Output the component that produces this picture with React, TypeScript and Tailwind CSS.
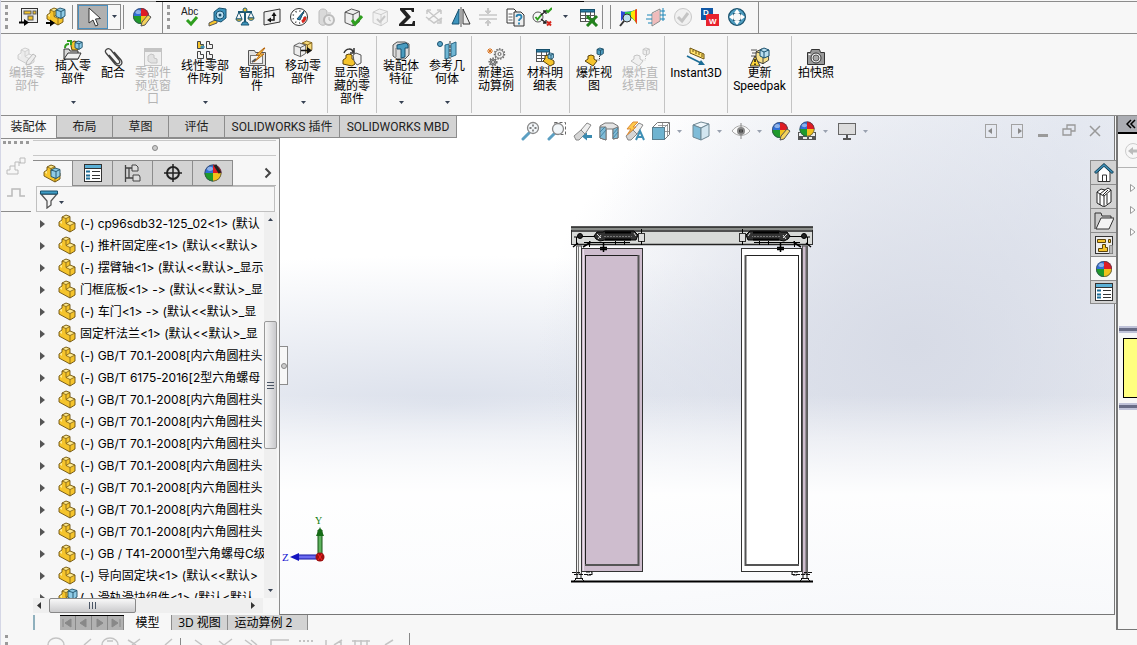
import type { ReactNode } from 'react'

const YELLOW = '#f5c42c'
const BLUE = '#3f8fb5'
const DARK = '#333'

const Ball = ({ r = 8, x = 10, y = 10 }: { r?: number; x?: number; y?: number }) => (
  <g transform={`translate(${x} ${y}) scale(${r})`}>
    <circle r="1" fill="#2f6fd8" />
    <path d="M0 0V-1A1 1 0 0 1 1 0Z" fill="#e01b24" />
    <path d="M0 0H1A1 1 0 0 1 0 1Z" fill="#f2c21c" />
    <path d="M0 0V1A1 1 0 0 1 -1 0Z" fill="#1f9a2c" />
    <ellipse cx="-.35" cy="-.5" rx=".35" ry=".25" fill="#fff" opacity=".45" />
    <circle r=".95" fill="none" stroke="#444" strokeWidth=".08" />
  </g>
)

const Pencil = () => (
  <path d="M9 19l1-4 6-7 3 2-6 8z" fill="#f4d35e" stroke="#555" />
)

const Part = ({ fill = YELLOW, line = '#6b5010', light = '#ffe98a' }: { fill?: string; line?: string; light?: string }) => (
  <g strokeLinejoin="round" strokeWidth=".9">
    <path d="M1 8l3-2V3l4-2 4 1.500V7l5 2v6l-5 3L1 12z" fill={fill} />
    <path d="M4 3l4-2 4 1.500-4 2zM8 9.500L12 7l5 2-5 2.500zM1 8l3-2v4z" fill={light} />
    <path d="M1 8l3-2V3l4-2 4 1.500V7l5 2v6l-5 3L1 12z" fill="none" stroke={line} />
    <path d="M4 3l4 1.500 4-2M8 4.500v5l4 2 5-2.500M12 11.500V18M8 9.500L12 7" fill="none" stroke={line} strokeWidth=".7" />
  </g>
)

const Cube = ({ x = 10, y = 1, s = 1, fill = '#8fcbe6', line = '#1d4f68' }: { x?: number; y?: number; s?: number; fill?: string; line?: string }) => (
  <g transform={`translate(${x} ${y}) scale(${s})`} fill={fill} stroke={line} strokeWidth={0.9 / s} strokeLinejoin="round">
    <path d="M0 2l4-2 5 1.500v6.500l-4 2.500-5-2z" />
    <path d="M0 2l5 1.500v7M5 3.500l4-2" fill="none" />
  </g>
)

const Table = ({ w = 14 }: { w?: number }) => (
  <g>
    <rect x="1.500" y="2.500" width={w} height="12" fill="#fff" stroke="#555" />
    <rect x="1.500" y="2.500" width={w} height="2.500" fill="#2b7ca3" stroke="#174f6b" />
    <path d={`M2 8.500h${w}M2 11.500h${w}M6.500 5v10M11.500 5v10`} stroke="#555" />
  </g>
)

const Lens = ({ x = 12, y = 7 }: { x?: number; y?: number }) => (
  <g>
    <path d={`M${x - 4} ${y + 5}L2 18`} stroke="#5b9fc2" strokeWidth="3" strokeLinecap="round" />
    <circle cx={x} cy={y} r="5.500" fill="#f2f6f9" stroke="#888" strokeWidth="1.300" />
  </g>
)

const Torch = () => (
  <g fill="#d5d5d5" stroke="#888" strokeLinejoin="round">
    <path d="M1 15l7-6 4 4-6 6H3z" />
    <path d="M8 9l6-7 4 2-6 9z" fill="#eee" />
  </g>
)

const Gear = ({ x, y, r, fill }: { x: number; y: number; r: number; fill: string }) => (
  <g>
    <circle cx={x} cy={y} r={r} stroke="#666" strokeWidth="1.500" strokeDasharray="1.500 1.300" />
    <circle cx={x} cy={y} r={r - 0.8} fill={fill} stroke="#666" strokeWidth=".8" />
    <circle cx={x} cy={y} r="1.500" fill="#f7f7f7" stroke="#666" />
  </g>
)

const List = () => (
  <g>
    <rect x="1.500" y="1.500" width="17" height="17" fill="#fff" stroke={DARK} />
    <rect x="2" y="2" width="16" height="3" fill="#5ab0d6" />
    <path d="M1.500 5.500h17" stroke={DARK} />
    <path d="M9 8.500h8M9 12.500h8M9 15.500h8" stroke={DARK} />
    <path d="M3 8.500h4M3 12.500h4M3 15.500h4" stroke="#1c6d96" strokeWidth="2" />
  </g>
)

const icons: Record<string, ReactNode> = {
  drawing: (
    <g>
      <rect x="2.500" y="1.500" width="16" height="14" fill="#eee" stroke={DARK} />
      <rect x="5" y="4" width="7" height="3" fill={YELLOW} stroke="#555" />
      <rect x="14" y="4" width="3" height="3" fill={YELLOW} stroke="#555" />
      <rect x="9" y="9" width="5" height="4" fill={YELLOW} stroke="#555" />
      <path d="M0 15.500h6" stroke="#000" strokeWidth="2" />
      <path d="M5 12l5 3.500L5 19z" fill="#000" />
    </g>
  ),
  assembly: (
    <g>
      <Part />
      <Cube />
      <path d="M0 16h5" stroke="#000" strokeWidth="2" />
      <path d="M4 12.500l5 3.500-5 3.500z" fill="#000" />
    </g>
  ),
  cursor: <path d="M6 1v15l4-3 2.500 6 2.500-1-2.500-6 5-.5z" fill="#fff" stroke="#333" />,
  paint: <g><Ball r={8} x={9} y={9} /><Pencil /></g>,
  spell: (
    <g>
      <text x="0" y="8" fontSize="10" fontFamily="Liberation Sans, sans-serif" fill="#222">Abc</text>
      <path d="M6 13l4 4 6-7" stroke="#2f9e1f" strokeWidth="3" fill="none" />
    </g>
  ),
  measure: (
    <g>
      <path d="M9 12l-8 4v3l8-3z" fill={YELLOW} stroke="#555" />
      <path d="M6 13V5l5-4 7 1v9l-5 4z" fill="#3d94bd" stroke="#18506e" />
      <circle cx="12" cy="8" r="4" fill="#b9def0" stroke="#18506e" />
      <circle cx="12" cy="8" r="1.500" fill="#18506e" />
    </g>
  ),
  scale: (
    <g stroke="#1c5875" fill="none">
      <path d="M10 2v15M3 5h14" strokeWidth="2" />
      <path d="M4 5l-3 7h6zM16 5l-3 6h6z" />
      <path d="M1 12h6c0 3-6 3-6 0zM13 11h6c0 3-6 3-6 0z" fill={YELLOW} />
      <path d="M6 18h8l-2-3H8z" fill="#3d94bd" />
      <circle cx="10" cy="3" r="2" fill={YELLOW} />
    </g>
  ),
  section: (
    <g>
      <path d="M2 5l16-3v13L2 18z" fill="#eee" stroke={DARK} />
      <path d="M7 13h5V8" stroke="#111" strokeWidth="1.500" fill="none" />
      <path d="M5 13l4-2.500v5zM12 5l-2.500 4h5z" fill="#111" />
    </g>
  ),
  gauge: (
    <g>
      <circle cx="10" cy="10" r="8.500" fill="#fff" stroke={DARK} />
      <circle cx="10" cy="10" r="6" fill="none" stroke={DARK} strokeDasharray="1 3" strokeWidth="1.500" />
      <path d="M16 10a6 6 0 0 1-3 5" stroke="#d7261d" strokeWidth="3" fill="none" />
      <path d="M8 12l7-8-4 9z" fill="#2680b0" stroke="#174f6b" />
    </g>
  ),
  timer: (
    <g fill="#d9d9d9" stroke="#bbb">
      <path d="M3 16V5c0-4 8-4 8 0v11c-2 3-6 3-8 0z" />
      <circle cx="13" cy="13" r="5" fill="#eee" strokeWidth="2" />
      <path d="M13 10v3l2 1M12 6h3" />
    </g>
  ),
  cubeCheck: (
    <g>
      <Cube x={2} y={2} s={1.6} fill="#eee" line="#444" />
      <path d="M9 13l3 4 7-8" stroke="#2f9e1f" strokeWidth="3" fill="none" />
    </g>
  ),
  cubeGray: (
    <g>
      <Cube x={3} y={2} s={1.6} fill="#f2f2f2" line="#c8c8c8" />
      <path d="M7 12l3 3 5-6" stroke="#c8c8c8" strokeWidth="2" fill="none" />
    </g>
  ),
  sigma: <path d="M3 1h14v4h-2l-1-2H8l6 7-7 7h8l1-3h2v5H2v-2l7-7-6-7z" fill="#222" />,
  split: (
    <g stroke="#c8c8c8" fill="none" strokeWidth="1.500">
      <path d="M3 3h4M3 3v4M3 3l14 12M17 3h-4M17 3v4M17 3L4 13M2 10l8 6 8-5" />
      <path d="M13 16h4v-4" />
    </g>
  ),
  mirror: (
    <g strokeLinejoin="round">
      <path d="M8 2v15H1z" fill="#3d94bd" stroke="#18506e" />
      <path d="M10 0v20" stroke="#555" />
      <path d="M12 2v15h7z" fill="#eee" stroke={DARK} />
    </g>
  ),
  squeeze: (
    <g stroke="#c8c8c8" fill="#c8c8c8">
      <path d="M1 8h18M1 12h18" strokeWidth="1.500" />
      <path d="M10 1v3M10 19v-3" strokeWidth="2" />
      <path d="M7 4h6l-3 3zM7 16h6l-3-3z" />
    </g>
  ),
  help: (
    <g>
      <path d="M2 2h7l2 2v12H2z" fill="#fff" stroke={DARK} />
      <path d="M9 5h7l3 3v11H9z" fill="#eee" stroke={DARK} />
      <path d="M3.500 7h4M3.500 10h4M3.500 13h4" stroke="#666" />
      <path d="M11.500 10c0-3 5-3 5 0 0 2-2.500 1.500-2.500 4M14 15.500v2" fill="none" stroke="#2680b0" strokeWidth="1.800" />
    </g>
  ),
  accept: (
    <g fill="none">
      <circle cx="6" cy="10" r="5" stroke="#555" />
      <path d="M3.500 10l2 2.500 4-5" stroke="#2f9e1f" strokeWidth="2" />
      <path d="M9 12l5 4M9 8l5-4M11 4h3v3M11 16h3v-3" stroke="#222" strokeWidth="1.300" />
      <path d="M14 3l2 2 4-4" stroke="#2f9e1f" strokeWidth="2" />
      <path d="M15 14.500l4 4M19 14.500l-4 4" stroke="#d7261d" strokeWidth="2" />
    </g>
  ),
  excel: (
    <g>
      <Table />
      <path d="M8 9l10 10M18 9L8 19" stroke="#23831d" strokeWidth="3" />
    </g>
  ),
  rainbow: (
    <g>
      <path d="M2 4c6 2 12 0 16-2v15c-2-3-4-7-8-7s-6 2-8 4z" fill="#2c49d8" />
      <path d="M6 5c5 0 9-1 12-3v15c-3-4-6-8-12-8z" fill="#2fd14a" />
      <path d="M12 5l6-3v15c-2-3-4-6-6-7z" fill="#ffe600" />
      <path d="M16 3l2-1v15l-2-3z" fill="#f23a1d" />
      <circle cx="8" cy="11" r="4" fill="#bfe0ee" stroke="#333" />
      <path d="M5 14l-4 5" stroke="#333" strokeWidth="2" />
    </g>
  ),
  flow: (
    <g>
      <path d="M6 6l8-4v12l-8 5z" fill="#fbe3e3" stroke="#888" />
      <path d="M8 6v11M10 5v11M12 4v11" stroke="#e08080" strokeWidth=".8" />
      <path d="M1 8h5M0 12h6M2 16h4M14 4h5M14 8h6M14 12h5M17 1v13" stroke="#1d86b8" />
    </g>
  ),
  okGray: (
    <g fill="none" stroke="#c8c8c8">
      <circle cx="10" cy="10" r="8.500" fill="#f0f0f0" />
      <path d="M5 10l4 4 6-8" strokeWidth="3" stroke="#c4c4c4" />
    </g>
  ),
  dw: (
    <g>
      <rect x="1" y="1" width="12" height="12" fill="#1158a6" />
      <rect x="6" y="7" width="13" height="12" fill="#e8232d" />
      <text x="3" y="8" fontSize="8" fontWeight="bold" fill="#fff" fontFamily="Liberation Sans, sans-serif">D</text>
      <text x="9" y="17" fontSize="8" fontWeight="bold" fill="#fff" fontFamily="Liberation Sans, sans-serif">W</text>
    </g>
  ),
  ring: (
    <g>
      <circle cx="10" cy="10" r="6.500" fill="none" stroke="#174f6b" strokeWidth="5" />
      <circle cx="10" cy="10" r="6.500" fill="none" stroke="#4f9dc0" strokeWidth="2.500" />
      <path d="M10 2l3 4H7zM18 10l-4 3V7zM10 18l-3-4h6zM2 10l4-3v6z" fill="#fff" />
    </g>
  ),
  editPart: (
    <g>
      <Part fill="#ebebeb" line="#c8c8c8" light="#f4f4f4" />
      <path d="M9 18l1-4 6-7 3 2-6 8z" fill="#eee" stroke="#bbb" />
    </g>
  ),
  insert: (
    <g>
      <path d="M8 6V3l3-2 4 1v8H9z" fill={YELLOW} stroke="#5a430c" />
      <Cube x={12} y={1} s={0.8} />
      <path d="M1 19V9h5l1 2h8v8z" fill="#d9d9d9" stroke={DARK} />
      <path d="M1 19l4-6h13l-3 6z" fill="#f1f1f1" stroke={DARK} />
      <path d="M2 8c0-3 1-4 4-4M4 1h4v4" stroke="#2f9e1f" strokeWidth="2" fill="none" />
    </g>
  ),
  clip: (
    <path d="M6 8l7 8c2 2 5 0 3-3L8 3C5 0 1 3 3 6l9 11c4 4 9 0 6-4l-7-8" fill="none" stroke="#444" strokeWidth="1.300" />
  ),
  preview: (
    <g stroke="#c4c4c4" fill="#f0f0f0">
      <rect x="1.500" y="1.500" width="17" height="17" />
      <path d="M2 3.500h16" strokeWidth="3" />
      <path d="M5 14V9l3-2 3 1v3l3 1v4H8z" fill="#e2e2e2" />
    </g>
  ),
  pattern: (
    <g fill="#f4f4f4" stroke="#444">
      <path d="M2.500 1.500h3v3h3v4h-6z" fill={YELLOW} />
      <path d="M11.500 1.500h3v3h3v4h-6zM2.500 11.500h3v3h3v4h-6zM11.500 11.500h3v3h3v4h-6z" />
      <path d="M6 6h3v2H6z" fill={BLUE} stroke={BLUE} />
    </g>
  ),
  smart: (
    <g>
      <path d="M1.500 18.500v-15h6l1 2h10v13z" fill="#e2e2e2" stroke="#555" />
      <rect x="3.500" y="8.500" width="12" height="8" fill="#f4f4f4" stroke="#777" />
      <path d="M17 1l-8 7h4l-6 7 10-8h-4l5-6z" fill="#ffd24a" stroke="#b5640e" />
      <path d="M5 15l4-3" stroke="#555" strokeWidth="2" />
    </g>
  ),
  move: (
    <g>
      <Cube x={9} y={1} s={1.1} fill="#f7db7c" line="#7a5a12" />
      <Cube x={1} y={3} s={1.3} fill="#ececec" line="#555" />
      <path d="M8 10.500h7" stroke="#111" strokeWidth="1.500" />
      <path d="M14 7l5 3.500-5 3.500z" fill="#111" />
    </g>
  ),
  showHide: (
    <g>
      <path d="M1 13l3-2V8l3-1 3 1v4l3 1v4l-3 2-9-2z" fill={YELLOW} stroke="#5a430c" />
      <path d="M12 14l-1-6 3-2 5 2v8l-4 2z" fill="#f2f2f2" stroke="#555" />
      <path d="M2 6c2-5 8-5 9-1M12 1v5H8" fill="none" stroke="#333" strokeWidth="1.500" />
    </g>
  ),
  feature: (
    <g>
      <path d="M2 5l4-3h8l4 2v11l-4 4H6l-4-3z" fill="#dcdcdc" stroke="#555" />
      <path d="M6 5l9-2 2 2v3h-3v9l-4 1V9H6z" fill="#4a9cc0" stroke="#18506e" />
      <path d="M5 8v9" stroke="#777" />
    </g>
  ),
  geometry: (
    <g>
      <circle cx="3" cy="4" r="2.500" fill="#5aa6c8" stroke="#18506e" />
      <path d="M8 5l4-1v14l-4 1zM14 4l5-2v13l-5 2z" fill="#6fb6d4" stroke="#2a6684" />
      <path d="M13 1v18" stroke="#333" strokeDasharray="3 1" />
    </g>
  ),
  motion: (
    <g>
      <Gear x={13.5} y={7} r={5} fill="#ececec" />
      <Gear x={7} y={15} r={3.8} fill="#aaa" />
      <path d="M4 1v6M1 4h6M2 2l4 4M6 2L2 6" stroke="#d8701a" />
    </g>
  ),
  bom: (
    <g>
      <Table w={13} />
      <path d="M8 14l2-2V9l3-1 3 1v3l3 2v3l-4 2z" fill={YELLOW} stroke="#5a430c" />
      <Cube x={13} y={6} s={0.6} />
    </g>
  ),
  explode: (
    <g>
      <path d="M1 14l3-2V9l3-1 3 1v3l3 2-4 5z" fill={YELLOW} stroke="#5a430c" />
      <Cube x={13} y={1} s={0.7} fill="#4f9dc0" />
      <path d="M15.500 9v4h-4" fill="none" stroke="#333" strokeDasharray="1 1" />
    </g>
  ),
  explodeGray: (
    <g>
      <path d="M1 14l3-2V9l3-1 3 1v3l3 2-4 5z" fill="#f0f0f0" stroke="#c4c4c4" />
      <Cube x={13} y={1} s={0.7} fill="#eee" line="#c4c4c4" />
      <path d="M15.500 9v4h-4" fill="none" stroke="#c4c4c4" strokeDasharray="1 1" />
    </g>
  ),
  instant: (
    <g>
      <path d="M4 1l14 6v5L4 6z" fill="#ffe06a" stroke="#6d5310" />
      <path d="M7 3v2M10 4v3M13 5v3M16 7v3" stroke="#6d5310" />
      <path d="M1 9l14 7" stroke="#1c6d96" strokeWidth="1.800" />
      <path d="M12 18h7l-4-5z" fill="#1c6d96" />
    </g>
  ),
  speedpak: (
    <g>
      <Cube x={6} y={2} s={1.4} fill="#f7e08a" line="#333" />
      <path d="M10 3l4-2 5 2v6l-5 2-4-2z" fill="#b9def0" stroke="#18506e" />
      <path d="M14 5v6M10 3l4 2 5-2" stroke="#18506e" />
      <path d="M1 3h6M2 6h5M1 9h5" stroke="#555" />
      <path d="M5 9l5 10H0z" fill="#ffd83a" stroke="#333" />
      <path d="M5 12v3M5 16.500v1.500" stroke="#111" strokeWidth="1.500" />
    </g>
  ),
  camera: (
    <g>
      <path d="M1.500 5.500h3l1-3h8l1 3h4v12h-17z" fill="#999" stroke="#333" />
      <circle cx="10" cy="11" r="5" fill="#f4f4f4" stroke="#333" />
      <circle cx="10" cy="11" r="3" fill="#aaa" stroke="#555" />
      <path d="M2.500 7.500h2" stroke="#fff" />
    </g>
  ),
  zoomFit: <g><Lens /><path d="M12 3.500v2M12 8.500v2M8.500 7h2M13.500 7h2" stroke="#555" strokeWidth="1.300" /></g>,
  zoomArea: <g><rect x="7.500" y="1.500" width="11" height="12" fill="none" stroke="#666" strokeDasharray="3 2" /><Lens x={11} y={8} /></g>,
  prevView: <g><Torch /><path d="M19 15.500h-6" stroke="#3a8ab0" strokeWidth="3" fill="none" /><path d="M9 15.500l5-4v8z" fill="#3a8ab0" /></g>,
  sectionView: (
    <g stroke="#777">
      <path d="M1 5l5-3h8l5 3v12l-5 1V8H7v11l-6-2z" fill="#e4e4e4" />
      <path d="M1 6h6v13l-6-2zM14 8l5-2v11l-5 1z" fill="#7fbcd8" />
      <path d="M1 11l5-5M1 16l6-7M14 13l5-6M14 17l5-6" stroke="#3a7a98" strokeWidth=".8" />
    </g>
  ),
  dynamic: (
    <g>
      <Torch />
      <path d="M8 1L2 8h4l-4 6 9-8H8l5-5z" fill="#ffc94a" stroke="#d98a3a" />
      <path d="M11 19l4-9 4 9M12.500 16h5" stroke="#3f8fb5" strokeWidth="2" fill="none" />
    </g>
  ),
  orient: (
    <g>
      <path d="M1.500 6.500l5-5h12v12l-5 5" fill="#fff" stroke="#777" />
      <path d="M13 7l5-5M11.500 2v5M7 4.500h10M16.500 4v12M13 10.500h5" stroke="#888" strokeWidth=".8" />
      <rect x="1.500" y="6.500" width="12" height="12" fill="#6fb3d0" stroke="#5a7f90" />
    </g>
  ),
  display: (
    <g stroke="#6f8894" strokeLinejoin="round">
      <path d="M2 4l8-3 8 2-8 4z" fill="#eef6fa" />
      <path d="M2 4l8 3v12l-8-3z" fill="#7fbcd8" />
      <path d="M10 7l8-4v12l-8 4z" fill="#d2e6f0" />
    </g>
  ),
  eye: (
    <g>
      <path d="M1 10c5-7 13-7 18 0-5 6-13 6-18 0z" fill="#fafafa" stroke="#aaa" />
      <circle cx="10" cy="10" r="4" fill="#888" />
      <circle cx="10" cy="10" r="2" fill="#333" />
      <path d="M10 2v16" stroke="#888" />
    </g>
  ),
  scene: (
    <g>
      <path d="M1 11h18v8H1z" fill="#555" />
      <path d="M2 12h4v3H2zM14 12h4v3h-4zM6 16h4v2H6zM12 16h3v2h-3z" fill="#eee" />
      <Ball r={7.5} x={10} y={8} />
    </g>
  ),
  monitor: (
    <g>
      <rect x="1.500" y="2.500" width="17" height="11" fill="#dcdcdc" stroke="#666" />
      <path d="M10 14v3M6 18h8" stroke="#555" strokeWidth="2" />
    </g>
  ),
  part: <Part />,
  partBlue: <g><Part /><Cube x={8} y={4} s={1} /></g>,
  subAssembly: <g><Part /><Cube x={10} y={1} /></g>,
  list: <List />,
  config: (
    <g fill="#ddd" stroke="#444">
      <path d="M2.500 2v17M2 5h8M2 15h8M6 5v10" fill="none" strokeWidth="1.300" />
      <path d="M9 2h4l2 2v4H9zM10 12h6l1 2v4h-7z" />
    </g>
  ),
  target: (
    <g fill="none" stroke="#222" strokeWidth="2">
      <circle cx="10" cy="10" r="6" />
      <path d="M10 1v18M1 10h18" strokeWidth="1.500" />
    </g>
  ),
  ball: <Ball r={8} />,
  ballEdit: <g><Ball r={8.5} /><path d="M12 2l5 8" stroke="#222" strokeWidth="3" /></g>,
  filter: (
    <g>
      <path d="M2 5l6 7v7l4-3v-4l6-7z" fill="#f4f4f4" stroke="#555" strokeWidth="1.300" />
      <path d="M1.500 2h17v3h-17z" fill="#3f9cc4" stroke="#174f6b" />
    </g>
  ),
  home: (
    <g>
      <path d="M4 9v9.500h12V9l-6-6z" fill="#fff" stroke={DARK} />
      <path d="M1 10l9-8 9 8" fill="none" stroke="#153f54" strokeWidth="3" />
      <path d="M1.500 9.500L10 2l8.500 7.500" fill="none" stroke="#3f8fb5" strokeWidth="1.500" />
      <path d="M8.500 18v-6h4v6" fill="none" stroke={DARK} />
    </g>
  ),
  library: (
    <g fill="#fff" stroke="#222" strokeLinejoin="round">
      <path d="M3 5l4-3 4 1 3-2 3 2v12l-7 5-7-4z" />
      <path d="M3 5l3 2v11M6 7l5-4M9 8l5-5M6 7l4 2v10M10 9l7-6M13 7v10" fill="none" />
    </g>
  ),
  folder: (
    <g stroke={DARK} strokeLinejoin="round">
      <path d="M1 18V2h6l1 3h9v3" fill="#ccc" />
      <path d="M2 18L7 7h13l-5 11z" fill="#f4f4f4" />
    </g>
  ),
  palette: (
    <g>
      <rect x="1.500" y="1.500" width="17" height="17" fill="#eee" stroke={DARK} />
      <path d="M3.500 4.500h8v3h-8zM14.500 4.500h2v3h-2zM8.500 9.500h3v3h2v4h-9v-3h4z" fill={YELLOW} stroke="#5a430c" />
      <path d="M15.500 10.500h3v8h-3z" fill="#bbb" stroke="#888" />
    </g>
  ),
  dockLeft: <g fill="none" stroke="#a2a2a2"><rect x="4.500" y="3.500" width="11" height="13" /><path d="M11 7v6L7 10z" fill="#888" stroke="none" /></g>,
  dockRight: <g fill="none" stroke="#a2a2a2"><rect x="4.500" y="3.500" width="11" height="13" /><path d="M11 7v6l4-3z" fill="#888" stroke="none" /></g>,
  minimize: <path d="M5 14.500h10" stroke="#9a9a9a" strokeWidth="3" />,
  restore: <g fill="none" stroke="#999" strokeWidth="1.300"><path d="M8 8V4h8v6h-4" /><path d="M4 8h8v6H4z" /></g>,
  close: <path d="M5 5l10 10M15 5L5 15" stroke="#999" strokeWidth="1.500" />,
}

const Icon = ({ name, className = 'size-5' }: { name: string; className?: string }) => (
  <svg viewBox="0 0 20 20" fill="none" className={`shrink-0 ${className}`} aria-hidden="true">{icons[name]}</svg>
)

const Caret = ({ className = 'text-gray-700' }: { className?: string }) => (
  <svg viewBox="0 0 5 3" className={`h-[3px] w-[5px] shrink-0 ${className}`} aria-hidden="true"><path d="M0 0h5L2.500 3z" fill="currentColor" /></svg>
)

const Grip = () => <div className="h-6 border-l-3 border-dotted border-[#9a9a9a]" />

const quickTools = ['spell', 'measure', 'scale', 'section', 'gauge', 'timer', 'cubeCheck', 'cubeGray', 'sigma', 'split', 'mirror', 'squeeze', 'help', 'accept']
const extraTools = ['rainbow', 'flow', 'okGray', 'dw', 'ring']

const ToolButton = ({ name }: { name: string }) => (
  <button aria-label={name} className="flex w-[27px] shrink-0 items-center justify-center"><Icon name={name} /></button>
)

const TopBar = () => (
  <header className="relative flex h-[34px] shrink-0 border-b border-[#8c8c8c] pt-px">
    <div className="absolute top-px left-[155px] h-px w-[428px] bg-black" />
    <div className="flex items-center border-t border-r border-[#8c8c8c] pr-[7px] pb-0.5 pl-1">
      <Grip />
      <div className="w-[7px]" />
      <ToolButton name="drawing" />
      <ToolButton name="assembly" />
      <div className="mr-1 ml-[3px] h-6 w-px bg-[#8c8c8c]" />
      <div className="flex h-[26px] border border-[#8c8c8c]">
        <button aria-label="select" className="flex w-[30px] items-center justify-center border border-[#4a8fbf] bg-[#b0b0b0]"><Icon name="cursor" /></button>
        <button aria-label="select options" className="flex w-3 items-center justify-center"><Caret /></button>
      </div>
      <div className="mr-1 ml-0.5 h-6 w-px bg-[#8c8c8c]" />
      <ToolButton name="paint" />
    </div>
    <div className="flex items-center border-t border-r border-[#8c8c8c] pr-2 pb-0.5 pl-1">
      <Grip />
      <div className="w-[7px]" />
      {quickTools.map((t) => <ToolButton key={t} name={t} />)}
      <button aria-label="more" className="flex w-5 justify-center"><Caret /></button>
      <ToolButton name="excel" />
      <div className="h-6 w-px bg-[#8c8c8c]" />
      <div className="mr-1 ml-[7px] h-6 w-px bg-[#8c8c8c]" />
      {extraTools.map((t) => <ToolButton key={t} name={t} />)}
    </div>
    <div className="flex-1 border-t border-[#8c8c8c]" />
  </header>
)

type Command = { icon: string; label: string; menu?: boolean; off?: boolean; size?: string }

const ribbon: Command[][] = [
  [
    { icon: 'editPart', label: '编辑零部件', off: true },
    { icon: 'insert', label: '插入零部件', menu: true },
    { icon: 'clip', label: '配合', size: 'w-[34px]' },
    { icon: 'preview', label: '零部件预览窗口', off: true },
    { icon: 'pattern', label: '线性零部件阵列', menu: true, size: 'w-[58px]' },
    { icon: 'smart', label: '智能扣件' },
    { icon: 'move', label: '移动零部件', menu: true },
  ],
  [{ icon: 'showHide', label: '显示隐藏的零部件' }],
  [
    { icon: 'feature', label: '装配体特征', menu: true },
    { icon: 'geometry', label: '参考几何体', menu: true },
  ],
  [{ icon: 'motion', label: '新建运动算例' }],
  [{ icon: 'bom', label: '材料明细表' }],
  [
    { icon: 'explode', label: '爆炸视图' },
    { icon: 'explodeGray', label: '爆炸直线草图', off: true },
  ],
  [{ icon: 'instant', label: 'Instant3D', size: 'w-[60px]' }],
  [{ icon: 'speedpak', label: '更新 Speedpak', size: 'w-[61px]' }],
  [{ icon: 'camera', label: '拍快照' }],
]

const Ribbon = () => (
  <div className="flex h-[82px] shrink-0 border-b border-[#8c8c8c] pl-[3px] font-['Roboto','Noto_Sans_CJK_SC',sans-serif]">
    {ribbon.map((group, i) => (
      <div key={i} className="flex">
        {i > 0 && <div className="mx-px my-0.5 w-px bg-[#c4c4c4]" />}
        {group.map((c) => (
          <button
            key={c.icon}
            disabled={c.off}
            className={`flex flex-col items-center px-0.5 text-[12px] leading-[13px] ${c.size ?? 'w-[46px]'} ${c.menu ? 'pt-1.5' : 'pt-[13px]'} ${c.off ? 'text-[#b4b4b4]' : 'text-black'}`}
          >
            <Icon name={c.icon} />
            <span>{c.label}</span>
            {c.menu && <span className="mt-[15px]"><Caret /></span>}
          </button>
        ))}
      </div>
    ))}
  </div>
)

const tabs = [
  { label: '装配体', size: 'w-[55px]' },
  { label: '布局', size: 'w-[56px]' },
  { label: '草图', size: 'w-[56px]' },
  { label: '评估', size: 'w-[56px]' },
  { label: 'SOLIDWORKS 插件', size: 'w-[115px]' },
  { label: 'SOLIDWORKS MBD', size: 'w-[118px]' },
]

const CommandTabs = () => (
  <nav className="flex h-[22px] w-max shrink-0 font-['Roboto','Noto_Sans_CJK_SC',sans-serif]">
    {tabs.map((t, i) => (
      <button
        key={t.label}
        className={`text-[12px] whitespace-nowrap text-[#222] ${t.size} ${i === 0 ? 'bg-[#f7f7f7]' : 'border-b border-l border-[#8c8c8c] bg-[#d3d3d3] last:border-r'}`}
      >
        {t.label}
      </button>
    ))}
  </nav>
)

const bolt = '(-) GB/T 70.1-2008[内六角圆柱头'
const parts = [
  '(-) cp96sdb32-125_02<1> (默认',
  '(-) 推杆固定座<1> (默认<<默认>',
  '(-) 摆臂轴<1> (默认<<默认>_显示',
  '门框底板<1> -> (默认<<默认>_显',
  '(-) 车门<1> -> (默认<<默认>_显',
  '固定杆法兰<1> (默认<<默认>_显',
  bolt,
  '(-) GB/T 6175-2016[2型六角螺母',
  bolt, bolt, bolt, bolt, bolt, bolt, bolt,
  '(-) GB / T41-20001型六角螺母C级',
  '(-) 导向固定块<1> (默认<<默认>',
  '(-) 滑轨滑块组件<1> (默认<默认',
]

const FeatureTree = () => (
  <div className="flex min-h-0 flex-1">
    <ul className="min-w-0 flex-1 overflow-hidden pt-px font-['Inter','Noto_Sans_CJK_SC',sans-serif] [font-variant-ligatures:none]">
      {parts.map((p, i) => (
        <li key={i} className="flex h-[22px] items-center overflow-hidden pl-[7px] text-[12px] whitespace-nowrap text-black">
          <svg viewBox="0 0 5 8" className="mr-[13px] h-2 w-[5px] shrink-0"><path d="M0 0l5 4-5 4z" fill="#555" /></svg>
          <Icon name={i === parts.length - 1 ? 'subAssembly' : 'part'} />
          <span className="ml-0.5">{p}</span>
        </li>
      ))}
    </ul>
    <div className="mr-0.5 flex w-[13px] flex-col items-center bg-[#efefef] py-1.5">
      <Caret className="rotate-180 text-gray-700" />
      <div className="mt-[100px] flex h-[128px] w-full flex-col items-center justify-center gap-0.5 rounded-xs border border-[#999] bg-linear-to-r from-[#f6f6f6] to-[#c9c9cc]">
        <i className="h-px w-[7px] bg-gray-600" />
        <i className="h-px w-[7px] bg-gray-600" />
        <i className="h-px w-[7px] bg-gray-600" />
      </div>
      <Caret className="mt-auto text-gray-700" />
    </div>
  </div>
)

const managerTabs = ['partBlue', 'list', 'config', 'target', 'ballEdit']

const FeaturePanel = () => (
  <section className="flex min-w-0 flex-1 flex-col">
    <div className="mt-px mr-[3px] flex h-4 shrink-0 items-center justify-center border-y border-[#c8c8c8]">
      <i className="size-1.5 rounded-full border border-[#888] bg-[#ccc]" />
    </div>
    <div className="mt-1 mr-[3px] flex h-[26px] shrink-0 items-center">
      {managerTabs.map((t, i) => (
        <button
          key={t}
          aria-label={t}
          className={`flex h-full w-10 items-center justify-center border-t border-r border-[#8c8c8c] ${i === 0 ? '' : 'border-b bg-[#d3d3d3]'}`}
        >
          <Icon name={t} />
        </button>
      ))}
      <div className="flex h-full flex-1 items-center justify-end border-b border-[#b4b4b4] pr-1">
        <svg viewBox="0 0 8 12" className="h-3 w-2"><path d="M1.500 1.500L6 6l-4.500 4.500" fill="none" stroke="#444" strokeWidth="2" /></svg>
      </div>
    </div>
    <div className="mr-1 ml-[3px] flex h-[26px] shrink-0 items-center border border-[#c0c0c0] pl-0.5">
      <Icon name="filter" />
      <span className="mt-1.5"><Caret /></span>
    </div>
    <FeatureTree />
    <div className="mr-4 flex h-[15px] shrink-0 items-center bg-[#efefef] px-1">
      <svg viewBox="0 0 4 7" className="h-[7px] w-1"><path d="M4 0v7L0 3.500z" fill="#333" /></svg>
      <div className="ml-2 flex h-full w-[87px] items-center justify-center gap-0.5 rounded-xs border border-[#888] bg-linear-to-b from-[#f8f8f8] to-[#cbcbcd]">
        <i className="h-[7px] w-px bg-gray-600" />
        <i className="h-[7px] w-px bg-gray-600" />
        <i className="h-[7px] w-px bg-gray-600" />
      </div>
      <svg viewBox="0 0 4 7" className="mr-1 ml-auto h-[7px] w-1"><path d="M0 0v7l4-3.500z" fill="#333" /></svg>
    </div>
    <div className="h-0.5 shrink-0" />
  </section>
)

const SideStrip = () => (
  <div className="w-8 shrink-0">
    <div className="flex h-[73px] w-[30px] flex-col items-center gap-3 border-b border-[#8c8c8c] pt-0.5">
      <div className="w-[26px] border-t-3 border-dotted border-[#9a9a9a]" />
      <svg viewBox="0 0 20 20" className="size-5" fill="none" stroke="#bbb"><path d="M1 18v-4h3v-4h5v4h3v4zM9 10V6h4v4M14 2h5v5h-5zM13 7l2-1" /></svg>
      <svg viewBox="0 0 20 10" className="h-2.5 w-5" fill="none" stroke="#bbb" strokeWidth="1.500"><path d="M1 8h5V1h8v7h5" /></svg>
    </div>
  </div>
)

const Hanger = () => (
  <g fill="none" stroke="#000">
    <path d="M574 237h7M576.500 237v8M579 236.500h16" />
    <circle cx="580" cy="236" r="2.500" fill="#222" />
    <path d="M594 236l3-4h6l2-1h29l4 4-2 5h-31l-5 1-4-2z" fill="#333" />
    <path d="M605 232.500h26M605 239.500h26" strokeWidth="2" />
    <path d="M604 236.500h28" stroke="#777" strokeDasharray="2 1" />
    <path d="M597 234l4 4M598 239l3-4M634 233l2 3" stroke="#ddd" />
    <rect x="638.500" y="233.500" width="6" height="8" fill="#ddd" stroke="#333" />
    <path d="M641.500 229v4M641.500 241v4M584 242.500h46M589.500 241v6M615.500 241v4M624.500 241v4" />
    <path d="M573 247l5-4M583 247l8-5M603.500 243v9M600 247.500h7M600 249.500h7" strokeWidth="1.500" />
  </g>
)

const Foot = () => (
  <g fill="none" stroke="#111">
    <path d="M572 572.500h8M574 574.500h18M586 572h6v3h-6" strokeDasharray="4 1" />
    <path d="M577 575v3l-3 3M581 575v3l3 3M575 578.500h8" />
  </g>
)

const Model = () => (
  <svg viewBox="571 226 252 358" className="mt-20 h-[358px] w-[252px]" role="img" aria-label="车门装配">
    <rect x="576.500" y="246" width="5" height="328" fill="#f3f3f3" stroke="#555" />
    <path d="M578.500 246v328" stroke="#777" />
    <rect x="581.500" y="248.500" width="61" height="323" fill="#cebdce" stroke="#333" />
    <path d="M583.500 249v322" stroke="#eadfea" />
    <rect x="585.500" y="255.500" width="53" height="310" fill="#cebdce" stroke="#222" />
    <path d="M638.500 255v311M585 565h54" stroke="#555" strokeWidth="2" />
    <rect x="802.500" y="246" width="5" height="328" fill="#cebdce" stroke="#555" />
    <path d="M806.500 246v328" stroke="#666" strokeWidth="2" />
    <rect x="741.500" y="248.500" width="60" height="323" fill="#fff" stroke="#333" />
    <rect x="745.500" y="255.500" width="53" height="310" fill="#fff" stroke="#222" />
    <path d="M745.500 255v311M745 565h54" stroke="#555" strokeWidth="2" />
    <rect x="571.500" y="227.500" width="241" height="17" fill="#d8dad8" stroke="#333" />
    <path d="M571 228.500h242" stroke="#8a8d8a" strokeWidth="3" />
    <path d="M571 227h242M571 231h242M577 244.500h230" stroke="#222" strokeWidth="1.500" />
    <Hanger />
    <g transform="translate(1384 0) scale(-1 1)"><Hanger /></g>
    <Foot />
    <g transform="translate(1384 0) scale(-1 1)"><Foot /></g>
    <path d="M571 581.500h242" stroke="#000" strokeWidth="2" />
  </svg>
)

const Triad = () => (
  <svg viewBox="280 512 50 55" className="mb-[47px] h-[55px] w-[50px] self-end">
    <path d="M318 530h4v24h-4z" fill="#5eb35e" stroke="#145214" />
    <path d="M320 527l4 9h-8z" fill="#156b15" />
    <path d="M298 555h19v4h-19z" fill="#6a6af0" stroke="#1515a0" />
    <path d="M290 557l9-4v8z" fill="#1515c0" />
    <circle cx="320" cy="557" r="4.500" fill="#a01010" />
    <path d="M318 554l4 6M322 554l-4 6" stroke="#f22" />
    <text x="315" y="524" fontSize="10" fontFamily="Liberation Serif, serif" fill="#0b7a0b">Y</text>
    <text x="282" y="561" fontSize="11" fontFamily="Liberation Serif, serif" fill="#1111d0">Z</text>
  </svg>
)

const viewTools = [
  { icon: 'zoomFit' }, { icon: 'zoomArea' }, { icon: 'prevView' }, { icon: 'sectionView' }, { icon: 'dynamic' },
  { icon: 'orient', menu: true }, { icon: 'display', menu: true }, { icon: 'eye', menu: true },
  { icon: 'paint' }, { icon: 'scene', menu: true }, { icon: 'monitor', menu: true },
]
const windowTools = ['dockLeft', 'dockRight', 'minimize', 'restore', 'close']
const taskTabs = ['home', 'library', 'folder', 'palette', 'ball', 'list']

const Viewport = () => (
  <main className="relative flex min-w-0 flex-1 flex-col border-r border-b border-[#777] bg-[linear-gradient(to_bottom,transparent_0%,transparent_56%,rgba(255,255,255,0.5)_65%,rgba(255,255,255,0.95)_76%,rgba(249,250,252,0.9)_100%),radial-gradient(ellipse_45%_60%_at_76%_46%,#d7dbe6_0%,transparent_100%),radial-gradient(ellipse_90%_30%_at_20%_58%,#dbe0eb_0%,transparent_100%),linear-gradient(115deg,#ffffff_0%,#ffffff_34%,#e6eaf2_75%,#ecedf2_100%)]">
    <div className="flex h-[30px] shrink-0 items-center justify-between pr-1.5 pl-[238px]">
      <div className="flex items-center">
        {viewTools.map((t) => (
          <div key={t.icon} className="flex items-center">
            <button aria-label={t.icon} className="flex w-[26px] justify-center"><Icon name={t.icon} /></button>
            {t.menu && <button aria-label={`${t.icon} options`} className="flex w-3.5 justify-center pr-1"><Caret className="text-gray-400" /></button>}
          </div>
        ))}
      </div>
      <div className="flex">
        {windowTools.map((t) => <button key={t} aria-label={t} className="flex w-[26px] justify-center"><Icon name={t} /></button>)}
      </div>
    </div>
    <div className="grid flex-1 grid-cols-[1fr_auto_1fr]">
      <Triad />
      <Model />
      <div className="z-10 mt-3.5 -mr-0.5 flex flex-col justify-self-end">
        {taskTabs.map((t) => (
          <button
            key={t}
            aria-label={t}
            className={`flex h-6 w-[26px] items-center justify-center border-t border-l border-[#8c8c8c] last:border-b ${t === 'ball' ? 'bg-[#f7f7f7]' : 'bg-[#d3d3d3]'}`}
          >
            <Icon name={t} />
          </button>
        ))}
      </div>
    </div>
  </main>
)

const TaskPane = () => (
  <aside className="-mb-[15px] ml-px w-[21px] shrink-0 overflow-hidden border-b border-l-2 border-[#777] bg-[#f7f7f7]">
    <div className="flex h-[18px] items-center border-b-2 border-black bg-[#abadb3] pl-2">
      <svg viewBox="0 0 10 10" className="size-2.5" fill="none" stroke="#000" strokeWidth="1.500"><path d="M5 1L1 5l4 4M9 1L5 5l4 4" /></svg>
    </div>
    <div className="flex h-[34px] items-center border-b border-[#b4b4b4] pl-[7px]">
      <svg viewBox="0 0 16 16" className="size-4 shrink-0"><circle cx="8" cy="8" r="7.500" fill="none" stroke="#ccc" /><path d="M3 8l5-4v2.500h5v3H8V12z" fill="#bbb" /></svg>
    </div>
    <div className="flex flex-col gap-3.5 pt-4 pl-3">
      {[0, 1, 2].map((n) => (
        <svg key={n} viewBox="0 0 6 8" className="h-2 w-1.5"><path d="M.5.5L5 4 .5 7.500z" fill="#fff" stroke="#999" /></svg>
      ))}
    </div>
    <div className="mt-[90px] ml-px h-[7px] border-y-2 border-[#bfc2d8] bg-[#686c86]" />
    <div className="mt-[5px] ml-[5px] h-[60px] border border-r-0 border-black bg-[#ffff80]" />
    <div className="mt-[5px] ml-px h-[7px] border-y-2 border-[#bfc2d8] bg-[#686c86]" />
  </aside>
)

const BottomTabs = () => (
  <nav className="mr-[22px] flex h-[15px] shrink-0 pl-8 text-[12px] leading-[14px] text-black">
    <div className="mr-[25px] border-l-2 border-[#8fb0bd]" />
    <div className="flex border-t border-black">
      {['M3 2v8M11 2v8L5 6z', 'M10 2v8L4 6z', 'M5 2v8l6-4z', 'M4 2v8l6-4zM12 2v8'].map((d) => (
        <button key={d} aria-label="翻页" className="flex w-4 items-center justify-center border-r border-[#888] bg-[#b1b1b1]">
          <svg viewBox="0 0 15 12" className="h-3 w-[15px]"><path d={d} fill="#888" stroke="#888" /></svg>
        </button>
      ))}
    </div>
    <button className="w-[47px]">模型</button>
    <button className="w-[57px] border-x border-[#8c8c8c] bg-[#d3d3d3]">3D 视图</button>
    <button className="w-20 border-r border-[#8c8c8c] bg-[#d3d3d3] pr-2">运动算例 2</button>
  </nav>
)

const SketchBar = () => (
  <footer className="flex h-[15px] shrink-0 items-end pl-1">
    <div className="h-2.5 w-10 border-l-3 border-dotted border-[#9a9a9a]" />
    <svg viewBox="44 632 366 13" className="h-[13px] w-[366px]" fill="none" stroke="#c4c4c4" strokeWidth="1.500">
      <path d="M47 645a8 7 0 0 1 16 0M83 645l7-6M101 645a8 7 0 0 1 16 0M106 641h6M127 640l8 5M131 645l8-6M164 645l7-6M194 640l7 5M218 641l5 4 8-6M244 640l7 5M250 640l6 5M270 645v-5h18M325 640v5M333 645l8-5M340 640v5M351 641h18M354 640v5M360 640v5M366 640v5M384 645l8-5" />
      <path d="M298 641h16" strokeDasharray="2 2" strokeWidth="2" />
      <path d="M179.500 638v7M408.500 633v12" stroke="#888" strokeWidth="1" />
    </svg>
  </footer>
)

const App = () => (
  <div className="flex h-screen flex-col overflow-hidden border-l border-[#d5d7e6] bg-[#f7f7f7] font-['Open_Sans','Noto_Sans_CJK_SC',sans-serif]">
    <TopBar />
    <Ribbon />
    <div className="flex min-h-0 flex-1">
      <div className="relative z-10 flex w-[279px] shrink-0 flex-col">
        <CommandTabs />
        <div className="flex min-h-0 flex-1 border-t border-r border-[#8c8c8c] bg-[#f7f7f7]">
          <SideStrip />
          <FeaturePanel />
        </div>
        <button aria-label="折叠面板" className="absolute top-[230px] left-full flex h-[39px] w-2 items-center justify-center border border-l-0 border-[#8c8c8c] bg-[#f7f7f7]">
          <i className="size-1.5 shrink-0 rounded-full border border-[#888] bg-[#ccc]" />
        </button>
      </div>
      <Viewport />
      <TaskPane />
    </div>
    <BottomTabs />
    <SketchBar />
  </div>
)

export default App
